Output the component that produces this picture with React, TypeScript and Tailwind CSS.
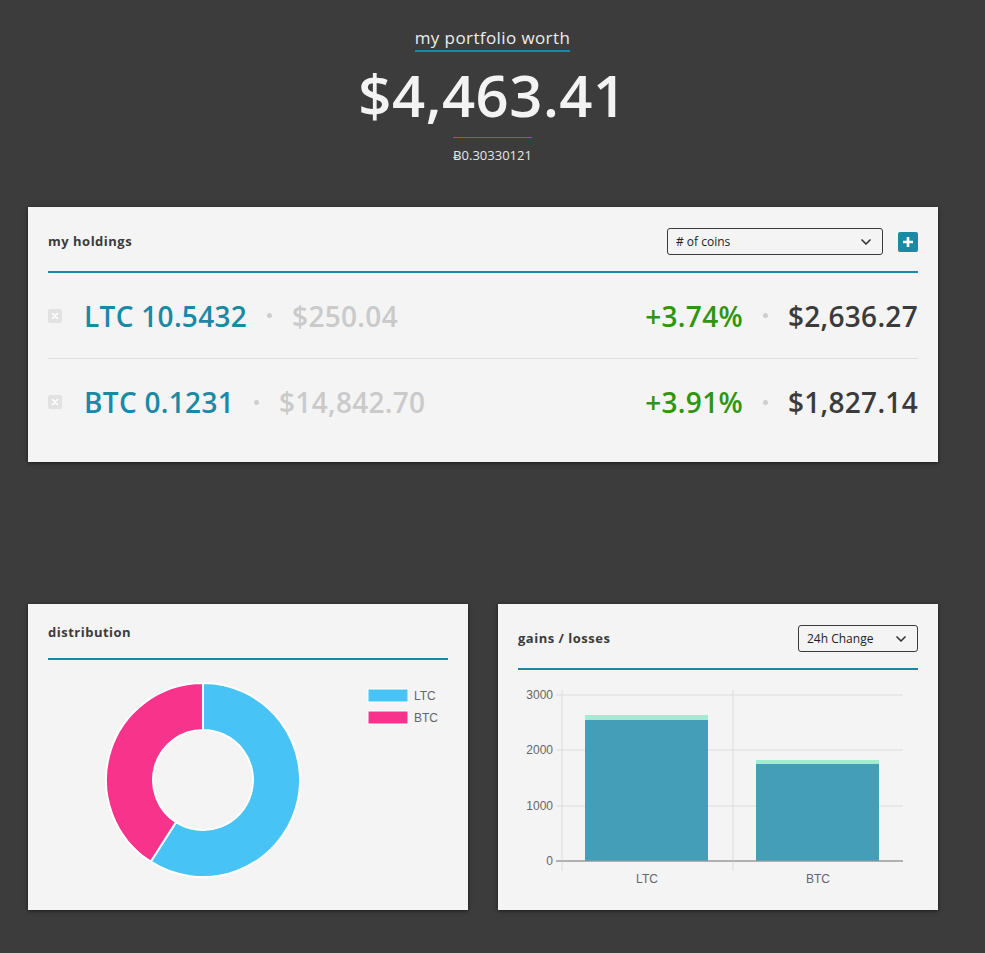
import { ChevronDown } from 'lucide-react';

const TEAL = '#1a89a6';

function Select({ label, width }: { label: string; width: string }) {
  return (
    <div
      className={`${width} h-[27px] flex items-center justify-between pl-[8px] pr-[8px] border border-[#3a3a3a] rounded-[3px] text-[12px] text-[#222] font-medium`}
    >
      <span>{label}</span>
      <ChevronDown size={16} strokeWidth={2.5} className="text-[#333]" />
    </div>
  );
}

function CloseBox() {
  return (
    <div className="w-[14px] h-[14px] rounded-[2px] bg-[#e2e2e2] flex items-center justify-center">
      <svg width="8" height="8" viewBox="0 0 8 8">
        <path d="M1.5 1.5 L6.5 6.5 M6.5 1.5 L1.5 6.5" stroke="#fff" strokeWidth="1.6" strokeLinecap="round" />
      </svg>
    </div>
  );
}

function Dot() {
  return <span className="mx-[20px] w-[5px] h-[5px] rounded-full bg-[#cfcfcf]" />;
}

function HoldingRow({
  coin,
  amount,
  price,
  change,
  value,
  last,
}: {
  coin: string;
  amount: string;
  price: string;
  change: string;
  value: string;
  last?: boolean;
}) {
  return (
    <div className={`h-[86px] flex items-center font-semibold tracking-[0.3px] ${last ? '' : 'border-b border-[#e0e0e0]'}`}>
      <CloseBox />
      <span className="ml-[22px] text-[28px] text-[#1a89a6]">
        {coin} {amount}
      </span>
      <Dot />
      <span className="text-[28px] text-[#cacaca]">{price}</span>
      <span className="ml-auto text-[28px] text-[#2f950c]">{change}</span>
      <Dot />
      <span className="text-[28px] text-[#3b3b3b]">{value}</span>
    </div>
  );
}

function Donut() {
  const cx = 155;
  const cy = 120;
  const R = 97;
  const r = 50;
  const frac = 2636.27 / 4463.41;
  const a0 = -Math.PI / 2;
  const a1 = a0 + frac * Math.PI * 2;
  const pt = (rad: number, a: number) => [cx + rad * Math.cos(a), cy + rad * Math.sin(a)];
  const arc = (s: number, e: number) => {
    const [x1, y1] = pt(R, s);
    const [x2, y2] = pt(R, e);
    const [x3, y3] = pt(r, e);
    const [x4, y4] = pt(r, s);
    const large = e - s > Math.PI ? 1 : 0;
    return `M${x1} ${y1} A${R} ${R} 0 ${large} 1 ${x2} ${y2} L${x3} ${y3} A${r} ${r} 0 ${large} 0 ${x4} ${y4} Z`;
  };
  return (
    <svg width="400" height="250" viewBox="0 0 400 250">
      <path d={arc(a0, a1)} fill="#47c3f5" stroke="#fff" strokeWidth="2" />
      <path d={arc(a1, a0 + Math.PI * 2)} fill="#f7338c" stroke="#fff" strokeWidth="2" />
      <rect x="320" y="29" width="40" height="13" fill="#47c3f5" stroke="#fff" strokeWidth="1" />
      <text x="366" y="40" fontSize="12" fill="#666" fontFamily="Liberation Sans, Arial, sans-serif">LTC</text>
      <rect x="320" y="51" width="40" height="13" fill="#f7338c" stroke="#fff" strokeWidth="1" />
      <text x="366" y="62" fontSize="12" fill="#666" fontFamily="Liberation Sans, Arial, sans-serif">BTC</text>
    </svg>
  );
}

function BarChart() {
  const font = 'Liberation Sans, Arial, sans-serif';
  const ticks = [
    { v: '3000', y: 25 },
    { v: '2000', y: 80 },
    { v: '1000', y: 136 },
    { v: '0', y: 191 },
  ];
  return (
    <svg width="400" height="225" viewBox="0 0 400 225">
      {ticks.map((t) => (
        <g key={t.v}>
          <line x1="38" y1={t.y} x2="385" y2={t.y} stroke={t.v === '0' ? '#9a9a9a' : '#dcdcdc'} strokeWidth="1" />
          <text x="35" y={t.y + 4} fontSize="12" fill="#666" textAnchor="end" fontFamily={font}>
            {t.v}
          </text>
        </g>
      ))}
      <line x1="44" y1="20" x2="44" y2="201" stroke="#dcdcdc" strokeWidth="1" />
      <line x1="215" y1="20" x2="215" y2="201" stroke="#dcdcdc" strokeWidth="1" />
      <rect x="67" y="45" width="123" height="5" fill="#a1ecd2" />
      <rect x="67" y="50" width="123" height="141" fill="#449eb7" />
      <rect x="238" y="90" width="123" height="4" fill="#a1ecd2" />
      <rect x="238" y="94" width="123" height="97" fill="#449eb7" />
      <line x1="38" y1="191" x2="385" y2="191" stroke="#9a9a9a" strokeWidth="1" />
      <text x="129" y="213" fontSize="12" fill="#666" textAnchor="middle" fontFamily={font}>LTC</text>
      <text x="300" y="213" fontSize="12" fill="#666" textAnchor="middle" fontFamily={font}>BTC</text>
    </svg>
  );
}

export default function App() {
  return (
    <div className="min-h-screen bg-[#3c3c3c] pt-[27px] pb-[43px] font-['Open_Sans','Noto_Sans',sans-serif]">
      {/* total */}
      <div className="flex flex-col items-center">
        <div className="text-[17px] leading-[22px] tracking-[0.4px] text-[#ededed] border-b-2 border-[#1a89a6] pb-[1px]">
          my portfolio worth
        </div>
        <div className="mt-[13px] text-[58px] leading-[60px] font-semibold tracking-[0.5px] text-[#f3f3f3]">$4,463.41</div>
        <div className="mt-[12px] w-[79px] h-px bg-[#1a89a6]" />
        <div className="mt-[9px] text-[13px] leading-[16px] text-[#e6e6e6]">Ƀ0.30330121</div>
      </div>

      {/* holdings */}
      <div className="ml-[28px] mt-[44px] w-[910px] bg-[#f4f4f4] shadow-[0_1px_4px_rgba(0,0,0,0.55)] px-[20px] pt-[21px] pb-[17px]">
        <div className="h-[27px] flex items-center">
          <span className="text-[13px] font-bold tracking-[0.5px] text-[#3b3b3b]">my holdings</span>
          <div className="ml-auto">
            <Select label="# of coins" width="w-[216px]" />
          </div>
          <div className="ml-[15px] w-[20px] h-[20px] rounded-[2px] flex items-center justify-center" style={{ background: TEAL }}>
            <svg width="12" height="12" viewBox="0 0 12 12">
              <path d="M6 1 V11 M1 6 H11" stroke="#fff" strokeWidth="2.6" />
            </svg>
          </div>
        </div>
        <div className="mt-[16px] h-[2px] bg-[#1a89a6]" />
        <HoldingRow coin="LTC" amount="10.5432" price="$250.04" change="+3.74%" value="$2,636.27" />
        <HoldingRow coin="BTC" amount="0.1231" price="$14,842.70" change="+3.91%" value="$1,827.14" last />
      </div>

      {/* charts */}
      <div className="ml-[28px] mt-[142px] w-[910px] grid grid-cols-2 gap-[30px]">
        <div className="h-[306px] bg-[#f4f4f4] shadow-[0_1px_4px_rgba(0,0,0,0.55)] px-[20px] pt-[20px]">
          <div className="h-[18px] flex items-center text-[13px] font-bold tracking-[0.5px] text-[#3b3b3b]">distribution</div>
          <div className="mt-[16px] h-[2px] bg-[#1a89a6]" />
          <Donut />
        </div>
        <div className="h-[306px] bg-[#f4f4f4] shadow-[0_1px_4px_rgba(0,0,0,0.55)] px-[20px] pt-[21px]">
          <div className="h-[27px] flex items-center">
            <span className="text-[13px] font-bold tracking-[0.5px] text-[#3b3b3b]">gains / losses</span>
            <div className="ml-auto">
              <Select label="24h Change" width="w-[120px]" />
            </div>
          </div>
          <div className="mt-[16px] h-[2px] bg-[#1a89a6]" />
          <BarChart />
        </div>
      </div>
    </div>
  );
}
